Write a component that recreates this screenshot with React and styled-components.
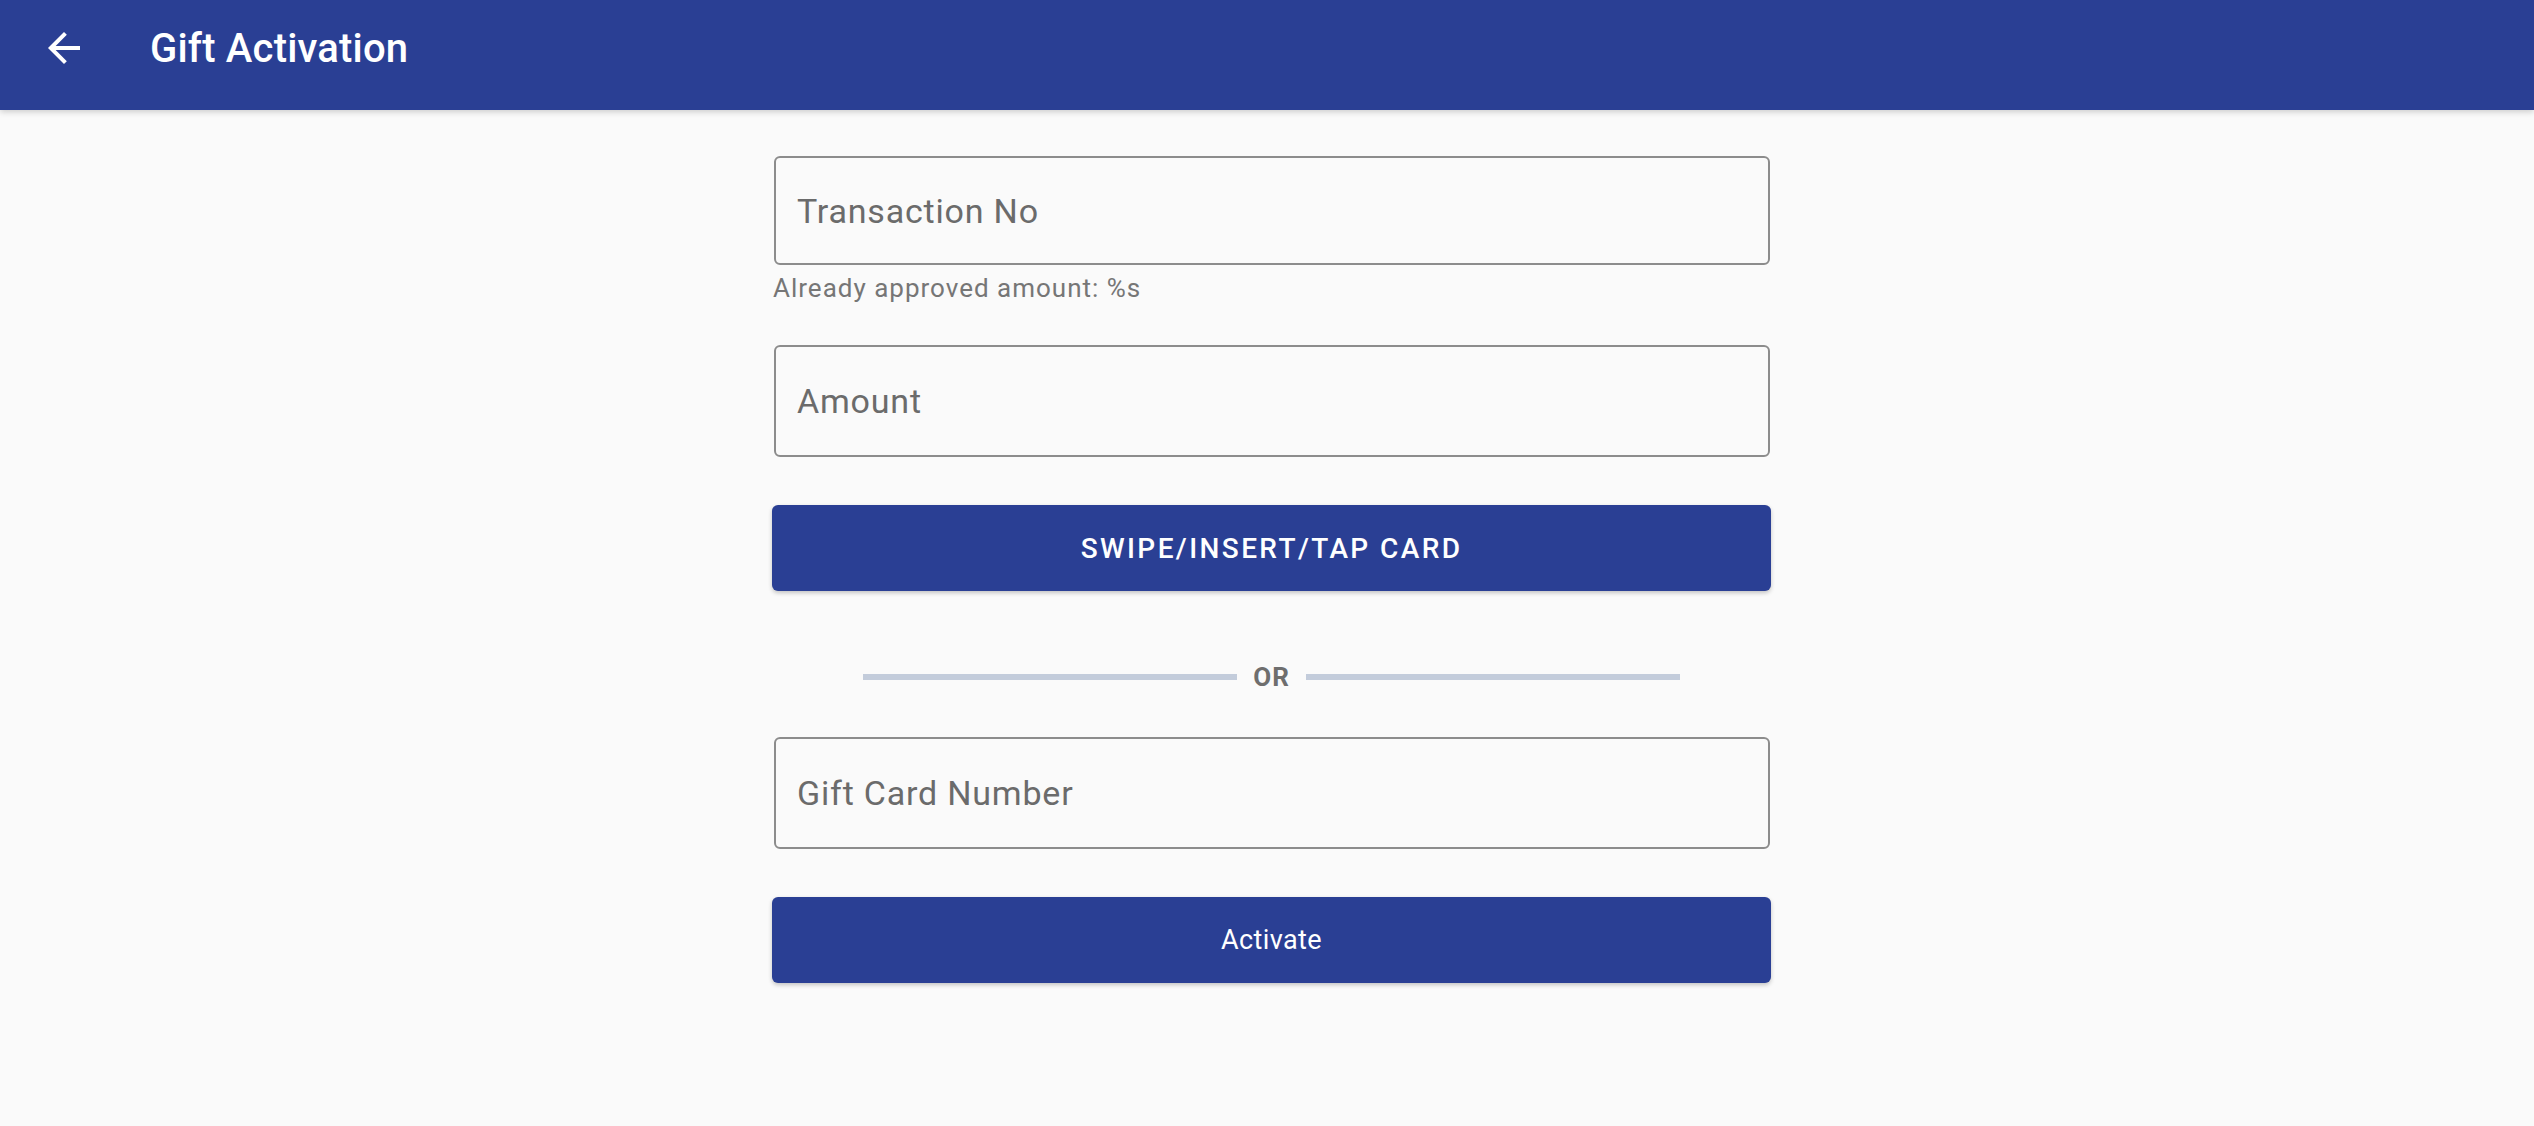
import React from 'react'
import styled, { createGlobalStyle } from 'styled-components'

const GlobalStyle = createGlobalStyle`
  html, body {
    margin: 0;
    padding: 0;
    background: #fafafa;
    font-family: Roboto, 'Noto Sans', sans-serif;
  }
`

const App = () => {
  return (
    <Page>
      <GlobalStyle />
      {/* App bar with back arrow and title */}
      <TopBar>
        <BackButton aria-label="Back">
          <svg width="48" height="48" viewBox="0 0 24 24" fill="#ffffff">
            <path d="M20 11H7.83l5.59-5.59L12 4l-8 8 8 8 1.41-1.41L7.83 13H20v-2z" />
          </svg>
        </BackButton>
        <Title>Gift Activation</Title>
      </TopBar>

      <Form>
        <Field placeholder="Transaction No" $h={109} />
        <Helper>Already approved amount: %s</Helper>
        <Field placeholder="Amount" $top={42} />
        <PrimaryButton $top={48} $caps>
          SWIPE/INSERT/TAP CARD
        </PrimaryButton>
        <Divider>
          <DividerLine />
          <DividerText>OR</DividerText>
          <DividerLine />
        </Divider>
        <Field placeholder="Gift Card Number" $top={45} />
        <PrimaryButton $top={48}>Activate</PrimaryButton>
      </Form>
    </Page>
  )
}

const Page = styled.div`
  min-height: 1126px;
  background: #fafafa;
`
const TopBar = styled.header`
  height: 110px;
  background: #2a3f94;
  display: flex;
  align-items: center;
  box-shadow: 0 2px 6px rgba(0, 0, 0, 0.18);
  padding-left: 40px;
  box-sizing: border-box;
`
const BackButton = styled.div`
  width: 48px;
  height: 48px;
  display: flex;
  margin-top: -15px;
`
const Title = styled.h1`
  margin: -14px 0 0 62px;
  color: #ffffff;
  font-size: 40px;
  font-weight: 500;
  letter-spacing: 0.2px;
`
const Form = styled.div`
  width: 999px;
  margin: 0 auto;
  padding: 46px 0 0 9px;
  display: flex;
  flex-direction: column;
`
const Field = styled.input`
  height: ${(p) => p.$h || 112}px;
  margin: ${(p) => p.$top || 0}px 1px 0 2px;
  box-sizing: border-box;
  border: 2px solid #8c8c8c;
  border-radius: 6px;
  background: transparent;
  padding: 0 0 0 21px;
  font-family: Roboto, sans-serif;
  font-size: 34px;
  letter-spacing: 0.8px;
  color: #333;
  outline: none;
  &::placeholder {
    color: #6b6b6b;
  }
`
const Helper = styled.div`
  margin-top: 8px;
  padding-left: 1px;
  font-size: 26px;
  line-height: 30px;
  letter-spacing: 1px;
  color: #767676;
`
const PrimaryButton = styled.button`
  height: 86px;
  margin-top: ${(p) => p.$top || 0}px;
  border: none;
  border-radius: 6px;
  background: #2a3f94;
  color: #ffffff;
  font-family: Roboto, sans-serif;
  font-size: ${(p) => (p.$caps ? '28px' : '27px')};
  font-weight: ${(p) => (p.$caps ? 500 : 400)};
  letter-spacing: ${(p) => (p.$caps ? '2.4px' : '0.4px')};
  box-shadow: 0 2px 4px rgba(0, 0, 0, 0.22);
  cursor: pointer;
`
const Divider = styled.div`
  margin-top: 71px;
  height: 30px;
  display: flex;
  align-items: center;
  justify-content: center;
  gap: 16px;
`
const DividerLine = styled.div`
  width: 374px;
  height: 6px;
  background: #c3ccdb;
`
const DividerText = styled.span`
  font-size: 26px;
  font-weight: 700;
  color: #6e6e6e;
  letter-spacing: 1px;
`

export default App
